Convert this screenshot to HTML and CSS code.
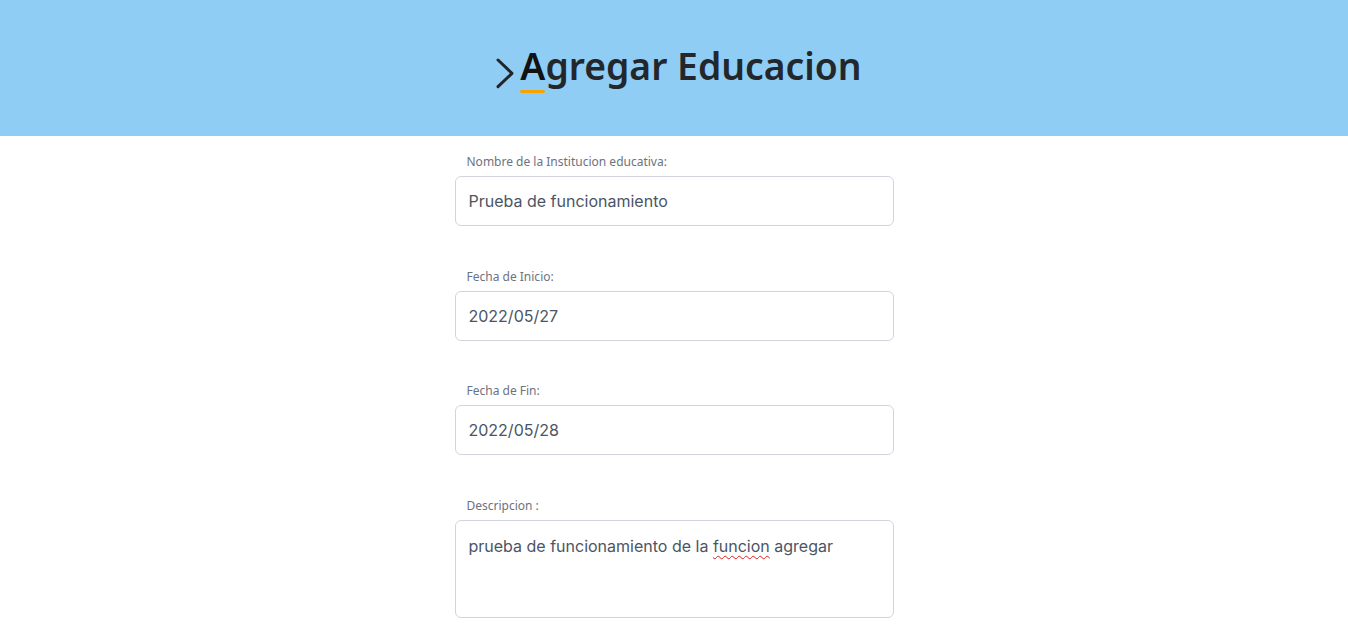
FILE: index.html
```html
<!DOCTYPE html>
<html lang="es">
<head>
<meta charset="utf-8">
<title>Agregar Educacion</title>
<link rel="stylesheet" href="styles.css">
</head>
<body>
<header class="hero">
  <div class="title-wrap">
    <svg class="chev" width="20" height="32" viewBox="0 0 20 32" aria-hidden="true">
      <polyline points="3,3 17,16.3 3,29.6" fill="none" stroke="#22252a" stroke-width="3" stroke-linecap="round" stroke-linejoin="round"/>
    </svg>
    <h1 class="title"><span class="first">A</span>gregar Educacion</h1>
  </div>
</header>
<main class="form">
  <div class="field">
    <label class="label">Nombre de la Institucion educativa:</label>
    <div class="input">Prueba de funcionamiento</div>
  </div>
  <div class="field">
    <label class="label">Fecha de Inicio:</label>
    <div class="input">2022/05/27</div>
  </div>
  <div class="field">
    <label class="label">Fecha de Fin:</label>
    <div class="input">2022/05/28</div>
  </div>
  <div class="field">
    <label class="label">Descripcion :</label>
    <div class="input area">prueba de funcionamiento de la <span class="spell">funcion</span> agregar</div>
  </div>
</main>
</body>
</html>
```
FILE: styles.css
```css
html, body {
  margin: 0;
  padding: 0;
  background: #ffffff;
}
body {
  font-family: Inter, "Noto Sans", sans-serif;
}
.hero {
  height: 136px;
  background: #90cdf4;
  display: flex;
  justify-content: center;
  align-items: flex-start;
}
.title-wrap {
  display: flex;
  align-items: flex-start;
  margin-top: 41px;
  margin-left: 9px;
}
.chev {
  margin-top: 16px;
  margin-right: 5px;
}
.title {
  margin: 0;
  font-family: "Noto Sans", "Open Sans", sans-serif;
  font-weight: 600;
  font-size: 37.3px;
  line-height: 50px;
  color: #23262b;
}
.first {
  position: relative;
  display: inline-block;
  color: #111214;
}
.first::after {
  content: "";
  position: absolute;
  left: 0;
  right: 0;
  bottom: -1.5px;
  height: 3px;
  border-radius: 2px;
  background: #f5a300;
}
.form {
  width: 439px;
  margin: 0 auto;
  padding-top: 18px;
}
.field {
  margin-bottom: 42.67px;
}
.label {
  display: block;
  margin-left: 12px;
  margin-bottom: 6px;
  font-family: "Noto Sans", "Open Sans", sans-serif;
  font-size: 12px;
  line-height: 16px;
  color: #6b7280;
}
.input {
  box-sizing: border-box;
  height: 50px;
  border: 1px solid #d1d5db;
  border-radius: 6px;
  padding: 0 13px;
  display: flex;
  align-items: center;
  font-size: 16px;
  color: #4b5563;
  background: #fff;
}
.input.area {
  height: 98px;
  display: block;
  padding: 15px 13px;
  line-height: 20px;
}
.spell {
  text-decoration: underline wavy #e0201c;
  text-decoration-thickness: 1px;
  text-underline-offset: 3px;
}
```
